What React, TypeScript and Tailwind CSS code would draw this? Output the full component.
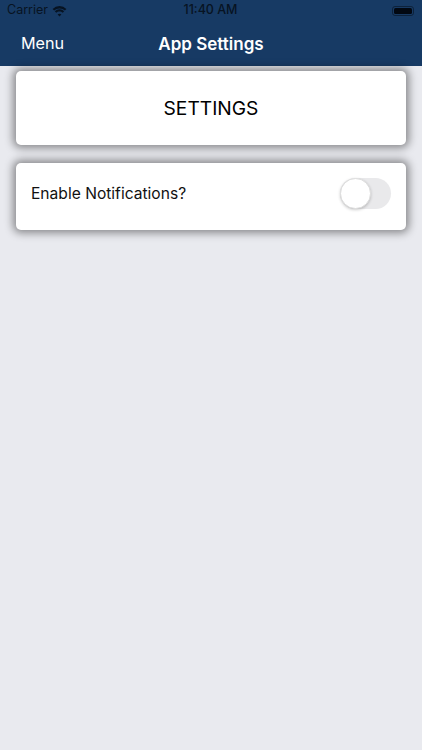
export default function App() {
  return (
    <div className="flex h-[750px] w-[422px] flex-col overflow-hidden bg-[#e9eaef] font-['Inter',sans-serif]">
      <header className="flex h-[66px] shrink-0 flex-col bg-[#173a64]">
        <div className="flex h-[21px] items-center justify-between pl-[7px] pr-[8px] text-[12.5px] leading-none text-[#071322]">
          <div className="flex w-[120px] items-center gap-[5px]">
            <span>Carrier</span>
            <svg width="15" height="11" viewBox="0 0 15 11" className="ml-[-1px] mt-[1px]">
              <path d="M7.5 2.4c2.1 0 4 .8 5.4 2.1l1.5-1.6A10.1 10.1 0 0 0 7.5.1 10.1 10.1 0 0 0 .6 2.9l1.5 1.6a7.9 7.9 0 0 1 5.4-2.1z" fill="#071322" />
              <path d="M7.5 5.5c1.2 0 2.4.5 3.2 1.3l1.5-1.6a6.8 6.8 0 0 0-9.4 0l1.5 1.6c.8-.8 2-1.3 3.2-1.3z" fill="#071322" />
              <path d="M7.5 7.7c-.8 0-1.4.3-1.9.7l1.9 2.1 1.9-2.1c-.5-.4-1.1-.7-1.9-.7z" fill="#071322" />
            </svg>
          </div>
          <span className="font-medium">11:40 AM</span>
          <div className="flex w-[120px] justify-end">
            <div className="flex h-[10px] w-[22px] items-center rounded-[3px] border border-[#071322]/60 p-[1px]">
              <div className="h-full w-full rounded-[1.5px] bg-[#020812]" />
            </div>
          </div>
        </div>
        <div className="relative flex h-[45px] items-center justify-center">
          <span className="absolute left-[21px] top-[12px] text-[16.2px] leading-[20px] text-white">Menu</span>
          <span className="text-[17px] font-semibold leading-[20px] text-white">App Settings</span>
        </div>
      </header>
      <main className="flex flex-col gap-[18px] px-[16px] pt-[5px]">
        <section className="flex h-[74px] items-center justify-center rounded-[5px] bg-white pt-[1px] shadow-[0_0_8px_3px_rgba(0,0,0,0.42)]">
          <h1 className="text-[19.2px] font-normal text-black">SETTINGS</h1>
        </section>
        <section className="flex h-[67px] items-start justify-between rounded-[5px] bg-white pl-[15px] pr-[15px] pt-[15px] shadow-[0_0_8px_3px_rgba(0,0,0,0.42)]">
          <span className="text-[15.6px] leading-[31px] text-[#111]">Enable Notifications?</span>
          <div className="h-[31px] w-[51px] rounded-full bg-[#e9e9eb]">
            <div className="h-[31px] w-[31px] rounded-full border border-[#dedede] bg-white shadow-[0_1px_3px_rgba(0,0,0,0.2)]" />
          </div>
        </section>
      </main>
    </div>
  );
}
